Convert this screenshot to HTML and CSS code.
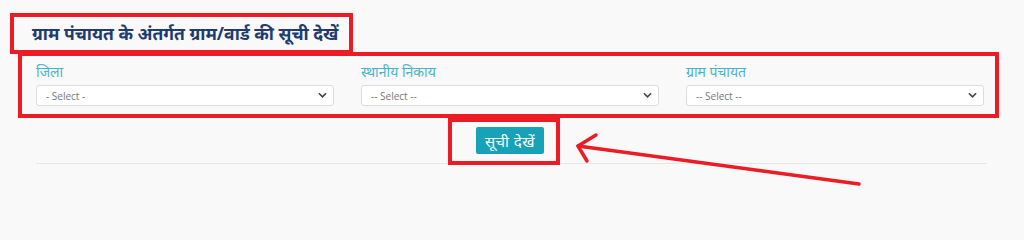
FILE: index.html
```html
<!DOCTYPE html>
<html lang="hi">
<head>
<meta charset="utf-8">
<title>ग्राम पंचायत सूची</title>
<link rel="stylesheet" href="styles.css">
</head>
<body>
<div class="page">
  <h2 class="title">ग्राम पंचायत के अंतर्गत ग्राम/वार्ड की सूची देखें</h2>
  <div class="fields">
    <div class="field">
      <label class="label">जिला</label>
      <div class="select"><span>- Select -</span><svg class="chev" viewBox="0 0 10 6"><path d="M1 1 L5 5 L9 1" fill="none" stroke="#444" stroke-width="1.8"/></svg></div>
    </div>
    <div class="field">
      <label class="label">स्थानीय निकाय</label>
      <div class="select"><span>-- Select --</span><svg class="chev" viewBox="0 0 10 6"><path d="M1 1 L5 5 L9 1" fill="none" stroke="#444" stroke-width="1.8"/></svg></div>
    </div>
    <div class="field">
      <label class="label">ग्राम पंचायत</label>
      <div class="select"><span>-- Select --</span><svg class="chev" viewBox="0 0 10 6"><path d="M1 1 L5 5 L9 1" fill="none" stroke="#444" stroke-width="1.8"/></svg></div>
    </div>
  </div>
  <div class="actions">
    <button class="btn">सूची देखें</button>
  </div>
  <div class="rule"></div>
</div>
<div class="mark mark-title"></div>
<div class="mark mark-fields"></div>
<div class="mark mark-btn"></div>
<svg class="arrow" viewBox="0 0 1024 229" width="1024" height="229">
  <path d="M859 184 L578 146" fill="none" stroke="#ed1c24" stroke-width="3.5" stroke-linecap="round"/>
  <path d="M596 135 L578 146 L587 161" fill="none" stroke="#ed1c24" stroke-width="3.5" stroke-linecap="round" stroke-linejoin="round"/>
</svg>
</body>
</html>
```
FILE: styles.css
```css
html, body {
  margin: 0;
  padding: 0;
  background: #f9f9f9;
  width: 1024px;
  height: 229px;
  overflow: hidden;
}
body {
  position: relative;
  font-family: "Open Sans", "Noto Sans", sans-serif;
}
.page {
  padding: 0 38px 0 36px;
}
.title {
  margin: 0 0 0 -4px;
  padding-top: 22px;
  height: 40px;
  box-sizing: border-box;
  font-size: 17.5px;
  line-height: 22px;
  font-weight: 700;
  color: #1e3c6d;
}
.fields {
  display: grid;
  grid-template-columns: 298px 298px 298px;
  column-gap: 27px;
  margin-top: 22px;
}
.field {
  display: flex;
  flex-direction: column;
}
.label {
  font-size: 14px;
  line-height: 20px;
  color: #4bb3c9;
  margin-bottom: 3px;
}
.select {
  height: 21px;
  box-sizing: border-box;
  background: #fff;
  border: 1px solid #dcdcdc;
  border-radius: 3px;
  display: flex;
  align-items: center;
  justify-content: space-between;
  padding: 0 6px 0 9px;
  font-size: 10px;
  color: #777;
}
.chev {
  width: 9px;
  height: 6px;
  margin-top: -2px;
}
.actions {
  display: flex;
  justify-content: center;
  margin-top: 21px;
}
.btn {
  height: 27px;
  width: 68px;
  background: #17a2b8;
  color: #fff;
  border: none;
  border-radius: 2px;
  font-family: "Noto Sans", sans-serif;
  font-size: 15px;
  letter-spacing: 0.5px;
  padding: 0;
  margin-left: -2px;
}
.rule {
  margin-top: 9px;
  height: 1px;
  background: #e6e6e6;
}
.mark {
  position: absolute;
  border: 4px solid #ed1c24;
  box-sizing: border-box;
}
.mark-title {
  left: 10px;
  top: 13px;
  width: 343px;
  height: 41px;
}
.mark-fields {
  left: 18px;
  top: 52px;
  width: 981px;
  height: 66px;
}
.mark-btn {
  left: 448px;
  top: 118px;
  width: 112px;
  height: 47px;
}
.arrow {
  position: absolute;
  left: 0;
  top: 0;
}
```
